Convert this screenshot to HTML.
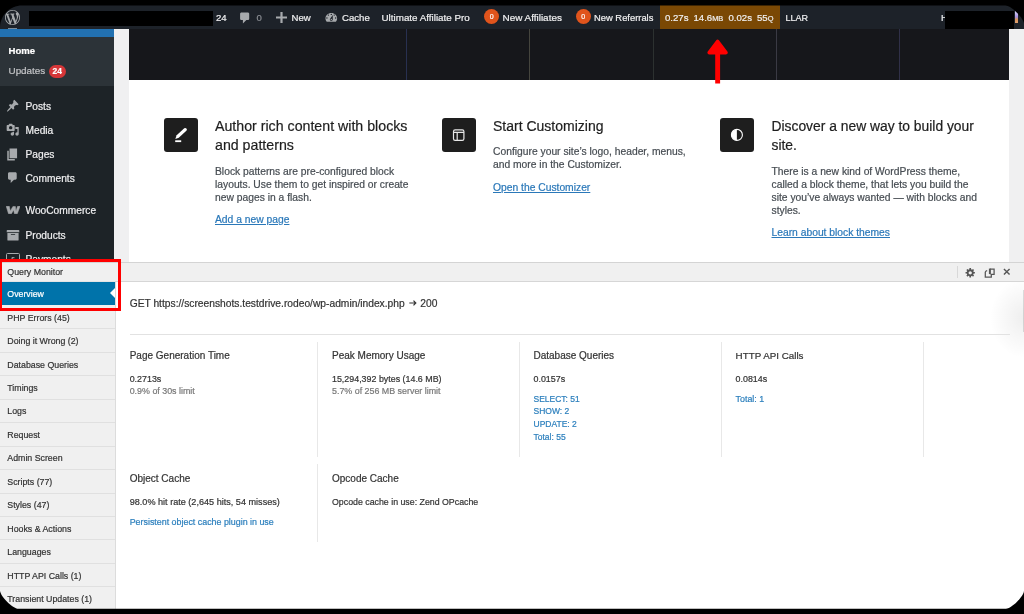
<!DOCTYPE html>
<html><head><meta charset="utf-8">
<style>
*{margin:0;padding:0;box-sizing:border-box}
html,body{width:1024px;height:614px;overflow:hidden;background:#000;font-family:"Liberation Sans",sans-serif}
#win{-webkit-text-stroke:0.2px currentColor}
#win{will-change:transform;position:absolute;left:0;top:0;width:1024px;height:614px;clip-path:path('M0 27.5C0.00 15.35 9.85 5.50 22.00 5.50L1005.5 5.5C1011.05 5.50 1024.00 18.45 1024.00 24.00L1024 590.8C1024.00 596.20 1011.40 608.80 1006.00 608.80L18.3 608.8C12.81 608.80 0.00 595.99 0.00 590.50Z');background:#f0f0f1}
.a{position:absolute;white-space:nowrap}
#bar{position:absolute;z-index:2;left:0;top:5px;width:1024px;height:23.5px;background:#1d2229;color:#f0f0f1;font-size:9.5px}
#side{position:absolute;left:0;top:28px;width:113.5px;height:586px;background:#1d2327}
#wp{position:absolute;left:129px;top:28px;width:880px;height:234px;background:#fff}
#hdr{position:absolute;left:0;top:0;width:880px;height:52.4px;background:#16171b}
.vl{position:absolute;top:0;width:1px;height:52.4px;background:#2a2b33}
.ib{position:absolute;width:34px;height:34px;background:#1e1e1e;border-radius:3px}
.h{position:absolute;font-size:14px;color:#1e1e1e;line-height:19.4px;white-space:nowrap}
.p{position:absolute;font-size:10.3px;color:#464c52;line-height:13px;white-space:nowrap}
.lk{position:absolute;font-size:10.3px;line-height:1;color:#2a78b9;text-decoration:underline;white-space:nowrap}
.tb{top:7.87px;font-size:9.6px;line-height:1}
.tb small{font-size:7.4px}
.oc{top:4.3px;width:15px;height:15px;border-radius:50%;background:#e0541c;color:#fff;font-size:7px;line-height:15px;text-align:center}
.mi{font-size:10.2px;line-height:1;color:#f0f0f1}
.nr{position:absolute;left:0;width:115px;height:23.48px;border-bottom:1px solid #e0e0e0}
.nt{left:7.3px;font-size:8.8px;line-height:1;color:#333}
.vs{width:1px;background:#e8e8e8}
.qt{font-size:10px;line-height:1;color:#333}
.qv{font-size:8.9px;line-height:1;color:#333}
.g{color:#666}
.bl{color:#2271b1}
#qm .g{color:#777}
#qm .bl{color:#2b7fbd}
</style></head><body>
<div id="win">
  <div id="bar">
    <svg class="a" style="left:4.6px;top:4.6px" width="15" height="15" viewBox="0 0 20 20"><path fill="#a7aaad" d="M20 10c0-5.52-4.48-10-10-10S0 4.48 0 10s4.48 10 10 10 10-4.48 10-10zM7.78 15.37L4.37 6.22c.55-.02 1.17-.08 1.17-.08.5-.06.44-1.13-.06-1.11 0 0-1.45.11-2.370.11-.18 0-.37 0-.58-.01C4.120 2.69 6.870 1.110 10 1.110c2.330 0 4.450.87 6.050 2.340-.68-.11-1.650.39-1.650 1.580 0 .74.450 1.360.900 2.100.350.610.550 1.360.550 2.460 0 1.490-1.400 5-1.400 5l-3.030-8.370c.540-.020.820-.170.820-.170.500-.050.440-1.250-.060-1.220 0 0-1.440.120-2.380.120-.870 0-2.330-.120-2.330-.120-.500-.030-.560 1.200-.060 1.220l.920.080 1.260 3.410zM17.410 10c.240-.640.740-1.870.430-4.250.700 1.290 1.050 2.710 1.050 4.250 0 3.290-1.730 6.240-4.400 7.780.970-2.590 1.940-5.200 2.920-7.780zM6.100 18.090C3.120 16.650 1.110 13.530 1.110 10c0-1.300.230-2.480.720-3.590C3.250 10.300 4.670 14.200 6.100 18.090zm4.030-6.630l2.580 6.980c-.860.290-1.760.450-2.710.450-.790 0-1.570-.110-2.290-.330.810-2.380 1.620-4.740 2.420-7.100z"/></svg>
    <div class="a" style="left:29px;top:5.5px;width:184px;height:15.5px;background:#000"></div>
    <div class="a" style="left:8.3px;top:23px;width:9px;height:1px;background:#7d8b98"></div>
    <div class="a tb" style="left:216px">24</div>
    <svg class="a" style="left:238.3px;top:6.4px" width="14" height="14" viewBox="0 0 20 20"><path fill="#a7aaad" d="M5 2h9c1.1 0 2 .9 2 2v7c0 1.1-.9 2-2 2h-2l-5 5v-5H5c-1.1 0-2-.9-2-2V4c0-1.1.9-2 2-2z"/></svg>
    <div class="a tb" style="left:256.5px;color:#8c8f94">0</div>
    <svg class="a" style="left:275.8px;top:6.5px" width="11" height="11" viewBox="0 0 11 11"><path fill="#a7aaad" d="M4.4 0h2.2v4.4H11v2.2H6.6V11H4.4V6.6H0V4.4h4.4z"/></svg>
    <div class="a tb" style="left:291.5px">New</div>
    <svg class="a" style="left:323.5px;top:5.1px" width="14.6" height="14.6" viewBox="0 0 20 20"><path fill="#a7aaad" d="M3.76 16h12.48C17.34 14.73 18 13.06 18 11.5 18 7.4 14.41 4 10 4s-8 3.4-8 7.5c0 1.56.66 3.23 1.76 4.5zM10 5c.55 0 1 .45 1 1s-.45 1-1 1-1-.45-1-1 .45-1 1-1zM6 6c.55 0 1 .45 1 1s-.45 1-1 1-1-.45-1-1 .45-1 1-1zm8 0c.55 0 1 .45 1 1s-.45 1-1 1-1-.45-1-1 .45-1 1-1zm-5.37 5.55L12 7v6c0 1.1-.9 2-2 2s-2-.9-2-2c0-.57.24-1.08.63-1.45zM4 10c.55 0 1 .45 1 1s-.45 1-1 1-1-.45-1-1 .45-1 1-1zm12 0c.55 0 1 .45 1 1s-.45 1-1 1-1-.45-1-1 .45-1 1-1zm-5 3c0-.55-.45-1-1-1s-1 .45-1 1 .45 1 1 1 1-.45 1-1z"/></svg>
    <div class="a tb" style="left:342px">Cache</div>
    <div class="a tb" style="left:381.5px;font-size:9.83px">Ultimate Affiliate Pro</div>
    <div class="a oc" style="left:484.3px"><span>0</span></div>
    <div class="a tb" style="left:502.5px;font-size:9.94px">New Affiliates</div>
    <div class="a oc" style="left:575.8px"><span>0</span></div>
    <div class="a tb" style="left:594px;font-size:9.4px">New Referrals</div>
    <div class="a" style="left:660px;top:0;width:120px;height:23.5px;background:#7a4804"></div>
    <div class="a tb" style="left:665px">0.27s</div>
    <div class="a tb" style="left:693.5px">14.6<small>MB</small></div>
    <div class="a tb" style="left:728.5px">0.02s</div>
    <div class="a tb" style="left:757px">55<small>Q</small></div>
    <div class="a tb" style="left:785.5px;font-size:9.05px;top:8.9px">LLAR</div>
    <div class="a tb" style="left:941px">H</div>
    <div class="a" style="left:945px;top:5.5px;width:69px;height:18px;background:#000"></div>
    <div class="a" style="left:1015px;top:6px;width:3px;height:12px;background:linear-gradient(#d8d6f5,#a58ee0 50%,#d9955a 70%,#e0a070)"></div>
  </div>
  <div id="side">
    <div class="a" style="left:0;top:0;width:114px;height:9px;background:#2271b1"></div>
    <div class="a" style="left:8px;top:0;width:9px;height:1px;background:#8aa0b8"></div>
    <div class="a" style="left:0;top:9px;width:114px;height:48.5px;background:#2c3338"></div>
    <div class="a mi" style="left:8.5px;top:18.4px;font-weight:bold;font-size:9.6px;color:#fff">Home</div>
    <div class="a mi" style="left:8.5px;top:38.4px;font-size:9.9px;color:#c3c4c7">Updates</div>
    <div class="a" style="left:48.6px;top:37.2px;width:17.2px;height:13px;border-radius:7px;background:#d63638;color:#fff;font-size:8.4px;font-weight:bold;line-height:13px;text-align:center">24</div>
    <svg class="a" style="left:6px;top:70.6px" width="13.6" height="13.6" viewBox="0 0 20 20"><path fill="#a7aaad" d="M10.44 3.02l1.82-1.82 6.36 6.35-1.83 1.82c-1.05-.68-2.48-.57-3.41.36l-.75.75c-.92.93-1.04 2.35-.35 3.41l-1.83 1.82-2.41-2.41-2.8 2.79c-.42.42-3.38 2.71-3.8 2.29s1.86-3.39 2.28-3.81l2.79-2.790L4.1 9.36l1.83-1.82c1.05.69 2.48.57 3.4-.36l.75-.75c.93-.92 1.05-2.35.36-3.41z"/></svg>
    <div class="a mi" style="left:25.5px;top:73.6px">Posts</div>
    <svg class="a" style="left:5.6px;top:94.8px" width="13.4" height="13.4" viewBox="0 0 20 20"><path fill="#a7aaad" d="M13 11V4c0-.55-.45-1-1-1h-1.67L9 1H5L3.67 3H2c-.55 0-1 .45-1 1v7c0 .55.45 1 1 1h10c.55 0 1-.45 1-1zM7 4.5c1.38 0 2.5 1.12 2.5 2.5S8.38 9.5 7 9.5 4.5 8.38 4.5 7 5.62 4.5 7 4.5zM14 6h5v10.5c0 1.38-1.12 2.5-2.5 2.5S14 17.880 14 16.5s1.12-2.5 2.5-2.5c.17 0 .34.02.5.05V9h-3V6zm-4 8.05V13h2v3.5c0 1.38-1.12 2.5-2.5 2.5S7 17.88 7 16.5 8.12 14 9.5 14c.17 0 .34.02.5.05z"/></svg>
    <div class="a mi" style="left:25.5px;top:97.7px">Media</div>
    <svg class="a" style="left:5.04px;top:119.2px" width="15.1" height="15.1" viewBox="0 0 20 20"><path fill="#a7aaad" d="M6 15V2h10v13H6zm-1 1h8v2H3V5h2v11z"/></svg>
    <div class="a mi" style="left:25.5px;top:122.4px">Pages</div>
    <svg class="a" style="left:5.6px;top:143px" width="13.4" height="13.4" viewBox="0 0 20 20"><path fill="#a7aaad" d="M5 2h9c1.1 0 2 .9 2 2v7c0 1.1-.9 2-2 2h-2l-5 5v-5H5c-1.1 0-2-.9-2-2V4c0-1.1.9-2 2-2z"/></svg>
    <div class="a mi" style="left:25.5px;top:146.3px">Comments</div>
    <svg class="a" style="left:5.8px;top:206.1px;top:178.1px" width="14.2" height="8" viewBox="0 0 14.2 8"><path d="M0.2 0.3H3.3L4.3 4.9L6.9 0.5H9.4L10 4.9L11.6 0.3H14.1L11.3 7.7H8.4L7.7 4L5.4 7.7H2.5Z" fill="#a7aaad" stroke="#a7aaad" stroke-width=".5" stroke-linejoin="round"/></svg>
    <div class="a mi" style="left:25.5px;top:178px">WooCommerce</div>
    <svg class="a" style="left:5.5px;top:199.8px" width="14" height="14" viewBox="0 0 20 20"><path fill="#a7aaad" d="M19 4v2H1V4c0-.55.45-1 1-1h16c.55 0 1 .45 1 1zM2 7h16v10c0 .55-.45 1-1 1H3c-.55 0-1-.45-1-1V7zm11 3V9H7v1h6z"/></svg>
    <div class="a mi" style="left:25.5px;top:202.7px">Products</div>
    <div class="a" style="left:6.2px;top:225.2px;width:13.4px;height:11px;border:1.6px solid #a7aaad;border-radius:1.5px"></div>
    <div class="a" style="left:11px;top:228px;font-size:7px;color:#a7aaad;font-weight:bold;line-height:1">£</div>
    <div class="a mi" style="left:25.5px;top:227.1px">Payments</div>
  </div>
  <div id="wp">
    <div id="hdr">
      <div class="vl" style="left:276.5px;background:#283050"></div>
      <div class="vl" style="left:400px;background:#45453e"></div>
      <div class="vl" style="left:523.5px;background:#2c3130"></div>
      <div class="vl" style="left:646.8px;background:#3a3a44"></div>
      <div class="vl" style="left:770px;background:#303048"></div>
    </div>
    <div class="ib" style="left:34.8px;top:89.7px">
      <svg width="34" height="34" viewBox="0 0 34 34"><path d="M20.26 10.35L22.34 12.65L14.74 19.65L11.3 20.9L12.66 17.35Z" fill="#fff"/><circle cx="21.3" cy="11.5" r="1.55" fill="#fff"/><rect x="11.2" y="22.3" width="6" height="1.8" fill="#fff"/></svg>
    </div>
    <div class="h" style="left:86px;top:88.9px;font-size:14.2px">Author rich content with blocks<br>and patterns</div>
    <div class="p" style="left:86px;top:137.1px">Block patterns are pre-configured block<br>layouts. Use them to get inspired or create<br>new pages in a flash.</div>
    <div class="lk" style="left:86px;top:187px">Add a new page</div>

    <div class="ib" style="left:313.2px;top:89.9px">
      <svg width="34" height="34" viewBox="0 0 34 34" fill="none" stroke="#e8e8e8" stroke-width="1.2"><rect x="11.5" y="11.8" width="10.4" height="10.6" rx="1.6"/><path d="M11.5 14.3h10.4M15.2 14.3v8.1"/></svg>
    </div>
    <div class="h" style="left:364px;top:88.9px">Start Customizing</div>
    <div class="p" style="left:364px;top:117.1px">Configure your site’s logo, header, menus,<br>and more in the Customizer.</div>
    <div class="lk" style="left:364px;top:154.5px">Open the Customizer</div>

    <div class="ib" style="left:591.1px;top:89.9px">
      <svg width="34" height="34" viewBox="0 0 34 34"><circle cx="16.9" cy="16.9" r="5.5" fill="none" stroke="#fff" stroke-width="1.1"/><path d="M16.9 11.4a5.5 5.5 0 0 0 0 11z" fill="#fff"/></svg>
    </div>
    <div class="h" style="left:642.5px;top:88.9px;font-size:13.85px">Discover a new way to build your<br>site.</div>
    <div class="p" style="left:642.5px;top:136.5px">There is a new kind of WordPress theme,<br>called a block theme, that lets you build the<br>site you’ve always wanted — with blocks and<br>styles.</div>
    <div class="lk" style="left:642.5px;top:200.3px">Learn about block themes</div>
  </div>
  <div id="qm" style="position:absolute;left:0;top:262px;width:1024px;height:352px;background:#fff">
    <div class="a" style="left:0;top:0;width:1024px;height:20px;background:#f0f0f0;border-top:1px solid #d4d4d4;border-bottom:1px solid #d6d6d6"></div>
    <div class="a" style="left:956.5px;top:4px;width:1px;height:12px;background:#d8d8d8"></div>
    <svg class="a" style="left:964.5px;top:4.8px" width="11" height="11" viewBox="0 0 20 20"><path fill="#555" d="M18 12h-2.18c-.17.7-.44 1.35-.81 1.93l1.54 1.54-2.1 2.1-1.54-1.54c-.58.36-1.23.63-1.91.79V19H8v-2.180c-.68-.16-1.33-.43-1.91-.79l-1.54 1.54-2.12-2.12 1.54-1.54c-.36-.58-.63-1.23-.79-1.91H1V9.030h2.170c.16-.7.440-1.350.810-1.940L2.430 5.550l2.100-2.100 1.540 1.540c.580-.370 1.240-.640 1.930-.810V2h3v2.180c.680.160 1.330.430 1.910.790l1.540-1.540 2.120 2.120-1.540 1.540c.360.590.640 1.240.800 1.940H18V12zm-8.500 1.500c1.660 0 3-1.340 3-3s-1.340-3-3-3-3 1.340-3 3 1.340 3 3 3z"/></svg>
    <svg class="a" style="left:983.5px;top:5.5px" width="11" height="10" viewBox="0 0 11 10" fill="none" stroke="#555" stroke-width="1.25"><path d="M5.9 1.1h4.2v5.3H6.6" /><path d="M5.9 .6v5.5" stroke-width="2"/><path d="M1.3 4v5h6v-2.6"/><path d="M1.1 3.7l2-1.3" stroke-width="1.2"/></svg>
    <svg class="a" style="left:1003px;top:6px" width="7.5" height="7.5" viewBox="0 0 8 8"><path d="M1 1l6 6M7 1L1 7" stroke="#555" stroke-width="1.5"/></svg>
    <div class="a" style="left:0;top:20px;width:115.5px;height:332px;background:#f0f0f0;border-right:1px solid #dcdcdc"></div>
    <div class="a" style="left:0;top:0;width:115px;height:20px;background:#f0f0f0;border-top:1px solid #d4d4d4;border-bottom:1px solid #e4e4e4"></div>
    <div class="a nt" style="top:5.75px">Query Monitor</div>
    <div class="a" style="left:0;top:20.1px;width:115px;height:22.9px;background:#0073aa"></div>
    <div class="a" style="left:110px;top:26.4px;width:0;height:0;border-top:5.5px solid transparent;border-bottom:5.5px solid transparent;border-right:5px solid #fff"></div>
    <div class="a nt" style="top:27.65px;color:#fff">Overview</div>
    <div class="nr" style="top:43.70px"></div>
    <div class="a nt" style="top:51.55px">PHP Errors (45)</div>
    <div class="nr" style="top:67.18px"></div>
    <div class="a nt" style="top:75.03px">Doing it Wrong (2)</div>
    <div class="nr" style="top:90.66px"></div>
    <div class="a nt" style="top:98.51px">Database Queries</div>
    <div class="nr" style="top:114.14px"></div>
    <div class="a nt" style="top:121.99px">Timings</div>
    <div class="nr" style="top:137.62px"></div>
    <div class="a nt" style="top:145.47px">Logs</div>
    <div class="nr" style="top:161.10px"></div>
    <div class="a nt" style="top:168.95px">Request</div>
    <div class="nr" style="top:184.58px"></div>
    <div class="a nt" style="top:192.43px">Admin Screen</div>
    <div class="nr" style="top:208.06px"></div>
    <div class="a nt" style="top:215.91px">Scripts (77)</div>
    <div class="nr" style="top:231.54px"></div>
    <div class="a nt" style="top:239.39px">Styles (47)</div>
    <div class="nr" style="top:255.02px"></div>
    <div class="a nt" style="top:262.87px">Hooks &amp; Actions</div>
    <div class="nr" style="top:278.50px"></div>
    <div class="a nt" style="top:286.35px">Languages</div>
    <div class="nr" style="top:301.98px"></div>
    <div class="a nt" style="top:309.83px">HTTP API Calls (1)</div>
    <div class="nr" style="top:325.46px"></div>
    <div class="a nt" style="top:333.31px">Transient Updates (1)</div>

    <div class="a" style="left:-1px;top:-2.9px;width:122.1px;height:51.9px;border:3.2px solid #f00"></div>

    <div class="a" style="left:990px;top:20px;width:34px;height:80px;background:radial-gradient(ellipse 34px 40px at 100% 45%,rgba(0,0,0,.065),rgba(0,0,0,0))"></div>
    <div class="a" style="left:1022.5px;top:28px;width:1.5px;height:42px;background:rgba(0,0,0,.12)"></div>
    <div class="a" style="left:129.7px;top:37px;font-size:10.25px;line-height:1;color:#333">GET https://screenshots.testdrive.rodeo/wp-admin/index.php</div>
    <svg class="a" style="left:408.6px;top:38.3px" width="8" height="6" viewBox="0 0 8 6"><path d="M.3 3h6.6M4.5.7L6.8 3 4.5 5.3" fill="none" stroke="#333" stroke-width="1.2"/></svg>
    <div class="a" style="left:420.3px;top:37px;font-size:10.25px;line-height:1;color:#333">200</div>
    <div class="a" style="left:129.7px;top:72px;width:880px;height:1px;background:#e2e2e2"></div>
    <div class="a vs" style="left:317px;top:80.4px;height:115px"></div>
    <div class="a vs" style="left:519.2px;top:80.4px;height:115px"></div>
    <div class="a vs" style="left:720.6px;top:80.4px;height:115px"></div>
    <div class="a vs" style="left:922.5px;top:80.4px;height:115px"></div>
    <div class="a vs" style="left:317px;top:202.2px;height:78px"></div>

    <div class="a qt" style="left:129.7px;top:88.6px">Page Generation Time</div>
    <div class="a qv" style="left:129.7px;top:112.8px">0.2713s</div>
    <div class="a qv g" style="left:129.7px;top:125.1px">0.9% of 30s limit</div>

    <div class="a qt" style="left:332px;top:88.6px">Peak Memory Usage</div>
    <div class="a qv" style="left:332px;top:112.8px">15,294,392 bytes (14.6 MB)</div>
    <div class="a qv g" style="left:332px;top:125.1px">5.7% of 256 MB server limit</div>

    <div class="a qt" style="left:533.5px;top:88.6px">Database Queries</div>
    <div class="a qv" style="left:533.5px;top:112.8px">0.0157s</div>
    <div class="a qv bl" style="left:533.5px;top:130.5px;line-height:12.8px;font-size:8.5px">SELECT: 51<br>SHOW: 2<br>UPDATE: 2<br>Total: 55</div>

    <div class="a qt" style="left:735.6px;top:88.6px;font-size:9.8px">HTTP API Calls</div>
    <div class="a qv" style="left:735.6px;top:112.8px">0.0814s</div>
    <div class="a qv bl" style="left:735.6px;top:132.5px">Total: 1</div>

    <div class="a qt" style="left:129.7px;top:211.7px">Object Cache</div>
    <div class="a qv" style="left:129.7px;top:236.2px;font-size:9.1px">98.0% hit rate (2,645 hits, 54 misses)</div>
    <div class="a qv bl" style="left:129.7px;top:256.4px">Persistent object cache plugin in use</div>

    <div class="a qt" style="left:332px;top:211.7px">Opcode Cache</div>
    <div class="a qv" style="left:332px;top:236.2px;font-size:8.8px">Opcode cache in use: Zend OPcache</div>
  </div>
  <svg class="a" style="left:0;top:0" width="1024" height="100"><path d="M717.6 41.6L725.9 52.6H709.3Z" fill="#f00" stroke="#f00" stroke-width="3.8" stroke-linejoin="round"/><rect x="715.2" y="52" width="4.9" height="31.5" fill="#f00"/></svg>
</div>
</body></html>
